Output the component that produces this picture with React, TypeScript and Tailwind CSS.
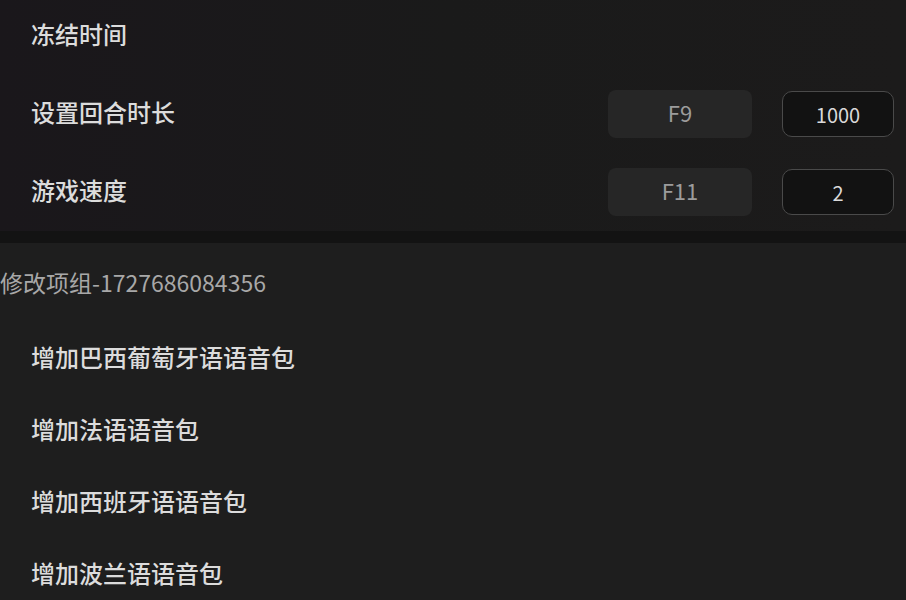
const rows = [
  { label: "冻结时间" },
  { label: "设置回合时长", key: "F9", value: "1000" },
  { label: "游戏速度", key: "F11", value: "2" },
];

const packs = ["增加巴西葡萄牙语语音包", "增加法语语音包", "增加西班牙语语音包", "增加波兰语语音包"];

export default function App() {
  return (
    <div className="h-[600px] w-full overflow-hidden bg-[#1e1e1e] font-['Noto_Sans_CJK_SC',sans-serif]">
      {/* top group */}
      <div className="-mt-[3px] bg-gradient-to-r from-[#1a171b] via-[#1a1a1a] to-[#1c1b1b]">
        {rows.map((r) => (
          <div key={r.label} className="flex h-[78px] items-center justify-between pl-[31px] pr-[12px]">
            <span className="pb-[5px] text-[24px] font-medium text-[#dcdcdc]">{r.label}</span>
            {r.key && (
              <div className="flex items-center gap-[30px]">
                <div className="flex h-[48px] w-[144px] items-center justify-center rounded-lg bg-[#262626] pb-[3px] text-[22px] text-[#9c9c9c]">
                  {r.key}
                </div>
                <input
                  readOnly
                  value={r.value}
                  className="h-[46px] w-[112px] rounded-[10px] border border-[#4a4a4a] bg-[#121212] text-center text-[20px] text-[#dadada] outline-none"
                />
              </div>
            )}
          </div>
        ))}
      </div>

      <div className="h-[12px] bg-[#131313]" />

      {/* second group */}
      <div className="flex h-[78px] items-center text-[23px] text-[#a8a8a8]">修改项组-1727686084356</div>
      {packs.map((p) => (
        <div key={p} className="flex h-[72px] items-center pl-[31px] text-[24px] font-medium text-[#dcdcdc]">
          {p}
        </div>
      ))}
    </div>
  );
}
